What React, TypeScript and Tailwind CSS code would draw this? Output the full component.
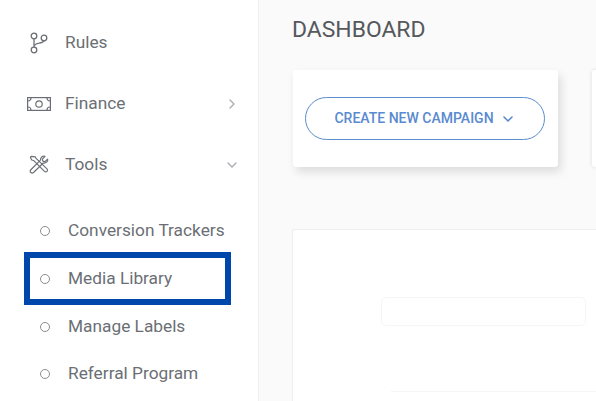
import { ChevronDown, ChevronRight } from 'lucide-react';
import type { ReactNode } from 'react';

const iconClass = 'text-[#6b6f75]';

function RulesIcon() {
  return (
    <svg width="20" height="22" viewBox="0 0 20 22" fill="none" stroke="currentColor" strokeWidth="1.3" className={iconClass}>
      <circle cx="5" cy="4" r="2.8" />
      <circle cx="5" cy="18" r="2.8" />
      <circle cx="15" cy="6" r="2.8" />
      <path d="M5 6.8v8.4M5.4 13.5c1-1.6 2.4-2 4.6-2.300 2.400-.4 4.500-1.300 5-2.500" />
    </svg>
  );
}

function FinanceIcon() {
  return (
    <svg width="24" height="14" viewBox="0 0 24 14" fill="none" stroke="currentColor" strokeWidth="1.2" className={iconClass}>
      <rect x="0.6" y="0.6" width="22.800" height="12.800" />
      <circle cx="12" cy="7" r="3.200" />
      <path d="M1 4c1.700 0 3-1.300 3-3M20 1c0 1.700 1.300 3 3 3M1 10c1.700 0 3 1.300 3 3M20 13c0-1.700 1.300-3 3-3" />
    </svg>
  );
}

function ToolsIcon() {
  return (
    <svg width="20" height="20" viewBox="0 0 22 22" fill="none" stroke="currentColor" strokeWidth="1.3" strokeLinejoin="round" className={iconClass}>
      <path d="M2.500 1.500 1.500 2.500l1.500 3 2 .5 12 12c.8.800 2.200.800 2.800 0 .7-.7.700-2 0-2.800L7.500 3.500 7 2z" />
      <path d="M20.500 4.500l-3 2.800-2.300-.5-.5-2.300 2.900-3c-2.600-.8-5.300 1.100-5 4.200L2 16.200c-.9.900-.9 2.200 0 3 .8.800 2.100.8 3 0L15.700 8.800c3 .400 5.500-1.500 4.800-4.300z" />
    </svg>
  );
}

function NavItem({ icon, label, trailing }: { icon: ReactNode; label: string; trailing?: ReactNode }) {
  return (
    <div className="flex h-[61px] items-center pr-[18px]">
      <div className="flex w-[65px] shrink-0 justify-center pl-[12px]">{icon}</div>
      <span className="flex-1 text-[17.300px] text-[#6b6f75]">{label}</span>
      {trailing}
    </div>
  );
}

function SubItem({ label, active }: { label: string; active?: boolean }) {
  return (
    <div
      className={
        active
          ? 'relative z-10 my-[-2px] ml-[24px] flex h-[53px] w-[207px] items-center border-[6px] border-[#0047ab] bg-white pl-[10px]'
          : 'ml-[40px] flex h-[47px] items-center'
      }
    >
      <span className="h-[10px] w-[10px] rounded-full border border-[#8a8e93]" />
      <span className="ml-[18px] text-[17.300px] text-[#6b6f75]">{label}</span>
    </div>
  );
}

export default function App() {
  return (
    <div className="flex h-[401px] w-[596px] overflow-hidden bg-[#fafafa] font-['Roboto',sans-serif]">
      <aside className="h-full w-[259px] shrink-0 border-r border-[#eeeff1] bg-white pt-[12px]">
        <NavItem icon={<RulesIcon />} label="Rules" />
        <NavItem
          icon={<FinanceIcon />}
          label="Finance"
          trailing={<ChevronRight size={16} className="text-[#a9acb0]" />}
        />
        <NavItem
          icon={<ToolsIcon />}
          label="Tools"
          trailing={<ChevronDown size={16} className="text-[#a9acb0]" />}
        />
        <div className="mt-[12px]">
          <SubItem label="Conversion Trackers" />
          <SubItem label="Media Library" active />
          <SubItem label="Manage Labels" />
          <SubItem label="Referral Program" />
        </div>
      </aside>

      <main className="min-w-0 flex-1 pl-[33px] pt-[15px]">
        <h1 className="text-[22.900px] leading-[30px] font-normal text-[#55585c]">DASHBOARD</h1>

        <div className="mt-[25px] ml-px flex gap-[34px]">
          <div className="flex h-[97px] w-[265px] shrink-0 items-center rounded-[3px] bg-white pl-[12px] shadow-[3px_5px_10px_rgba(0,0,0,0.12)]">
            <button className="flex h-[43px] w-[240px] items-center justify-center gap-[6px] rounded-full border border-[#5a8ccf] text-[14px] font-medium text-[#5a8ad0]">
              CREATE NEW CAMPAIGN
              <ChevronDown size={16} strokeWidth={2.4} />
            </button>
          </div>
          <div className="h-[97px] w-[200px] shrink-0 rounded-[3px] bg-white shadow-[0_0_4px_rgba(0,0,0,0.12)]" />
        </div>

        <div className="mt-[62px] h-[200px] w-[340px] rounded-tl-[2px] border-t border-l border-[#eeeeef] bg-white pl-[88px] pt-[67px]">
          <div className="h-[29px] w-[205px] rounded-[5px] border border-[#f6f6f6]" />
          <div className="ml-[10px] mt-[65px] h-px w-[300px] bg-[#f5f5f5]" />
        </div>
      </main>
    </div>
  );
}
